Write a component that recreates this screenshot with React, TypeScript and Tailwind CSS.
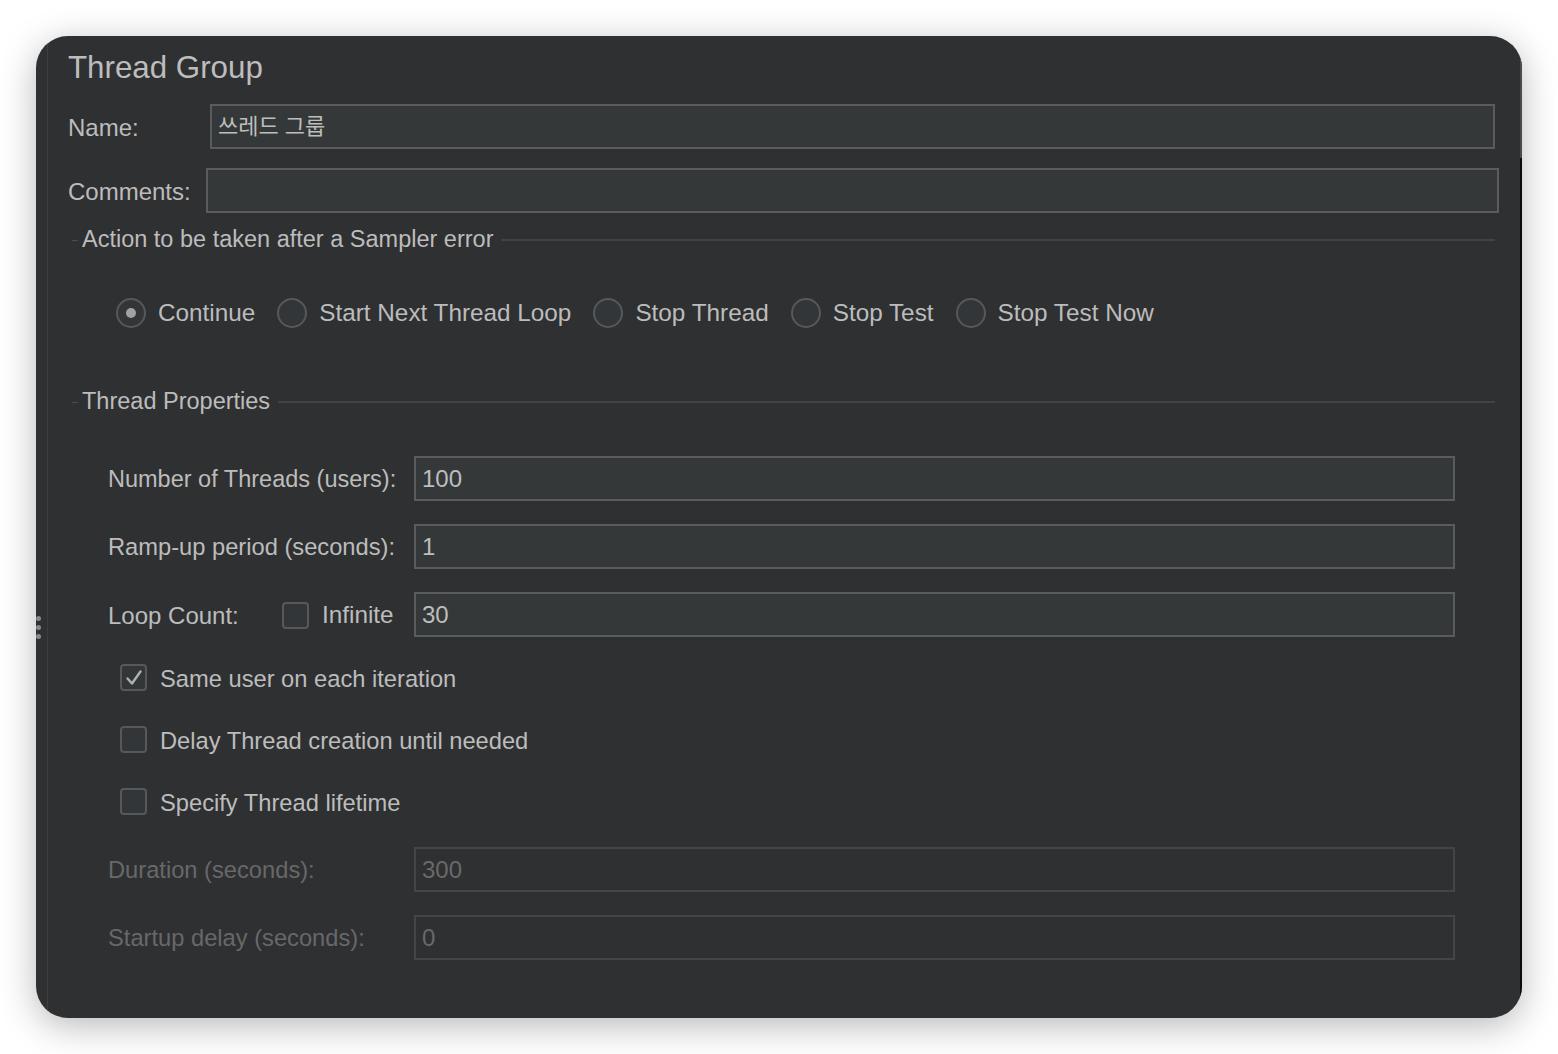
import React from "react";

const FONT = { fontFamily: '"Liberation Sans", "Noto Sans CJK KR", Arial, sans-serif' };

function Input({ value = "", disabled = false, className = "" }: { value?: string; disabled?: boolean; className?: string }) {
  return (
    <div
      className={
        "flex items-center h-[45px] border-2 pl-[6px] " +
        (disabled
          ? "bg-[#2f3032] border-[#434547] text-[#68696b] "
          : "bg-[#353839] border-[#595b5d] text-[#bdbdbd] ") +
        className
      }
    >
      {value}
    </div>
  );
}

function Radio({ checked = false, label }: { checked?: boolean; label: string }) {
  return (
    <div className="flex items-center">
      <div className="w-[30px] h-[30px] rounded-full border-2 border-[#56595b] bg-[#323638] flex items-center justify-center">
        {checked && <div className="w-[10px] h-[10px] rounded-full bg-[#a2a2a2]" />}
      </div>
      <span className="ml-[12px] text-[24.3px] text-[#bcbcbc] leading-none">{label}</span>
    </div>
  );
}

function Checkbox({ checked = false }: { checked?: boolean }) {
  return (
    <div className="w-[27px] h-[27px] shrink-0 rounded-[4px] border-2 border-[#56595b] bg-[#323638] flex items-center justify-center">
      {checked && (
        <svg width="20" height="20" viewBox="0 0 20 20">
          <path d="M3.5 10.5 L8 15.5 L16.5 3.5" fill="none" stroke="#b0b0b0" strokeWidth="2.4" strokeLinecap="round" strokeLinejoin="round" />
        </svg>
      )}
    </div>
  );
}

function GroupHeader({ title }: { title: string }) {
  return (
    <div className="flex items-center h-[24px] ml-[4px] mr-[25px]">
      <div className="w-[6px] h-[1px] bg-[#4a4c4e]" />
      <span className="ml-[4px] text-[23.5px] text-[#bcbcbc] leading-none">{title}</span>
      <div className="ml-[8px] flex-1 h-[2px] bg-[#414345]" />
    </div>
  );
}

function CheckRow({ checked = false, label, className = "" }: { checked?: boolean; label: string; className?: string }) {
  return (
    <div className={"flex items-center h-[27px] ml-[12px] " + className}>
      <Checkbox checked={checked} />
      <span className="ml-[13px] mt-[4px] text-[23.7px] leading-none text-[#bcbcbc]">{label}</span>
    </div>
  );
}

export default function App() {
  return (
    <div className="w-[1558px] h-[1054px] bg-white pt-[36px] pl-[36px]" style={FONT}>
      <div className="w-[1486px] h-[982px] rounded-[32px] bg-[#2f3032] overflow-hidden flex shadow-[0_8px_36px_rgba(0,0,0,0.28)]">
        {/* left splitter strip */}
        <div className="w-[11px] flex flex-col items-start pt-[580px] gap-[4px]">
          <div className="w-[5px] h-[5px] rounded-full bg-[#8a8a8a]" />
          <div className="w-[5px] h-[5px] rounded-full bg-[#8a8a8a]" />
          <div className="w-[5px] h-[5px] rounded-full bg-[#8a8a8a]" />
        </div>
        {/* main panel */}
        <div className="flex-1 border-l border-[#3d3e40] pl-[20px] pt-[14px] flex flex-col">
          <div className="text-[31.3px] leading-[36px] text-[#bdbdbd]">Thread Group</div>

          <div className="flex items-center mt-[18px] mr-[25px]">
            <span className="w-[142px] shrink-0 text-[24px] text-[#bcbcbc] pt-[2px]">Name:</span>
            <Input className="flex-1 text-[22px]" value="쓰레드 그룹" />
          </div>

          <div className="flex items-center mt-[19px] mr-[21px]">
            <span className="w-[138px] shrink-0 text-[24px] text-[#bcbcbc] pt-[2px]">Comments:</span>
            <Input className="flex-1 text-[24px]" />
          </div>

          <div className="mt-[15px]">
            <GroupHeader title="Action to be taken after a Sampler error" />
          </div>

          <div className="flex items-center mt-[46px] ml-[48px] gap-[22px]">
            <Radio checked label="Continue" />
            <Radio label="Start Next Thread Loop" />
            <Radio label="Stop Thread" />
            <Radio label="Stop Test" />
            <Radio label="Stop Test Now" />
          </div>

          <div className="mt-[62px]">
            <GroupHeader title="Thread Properties" />
          </div>

          <div className="ml-[40px] mr-[65px] flex flex-col">
            <div className="flex items-center mt-[42px]">
              <span className="w-[306px] shrink-0 text-[23.5px] text-[#bcbcbc] pt-[2px]">Number of Threads (users):</span>
              <Input className="flex-1 text-[24px]" value="100" />
            </div>
            <div className="flex items-center mt-[23px]">
              <span className="w-[306px] shrink-0 text-[23.7px] text-[#bcbcbc] pt-[2px]">Ramp-up period (seconds):</span>
              <Input className="flex-1 text-[24px]" value="1" />
            </div>
            <div className="flex items-center mt-[23px]">
              <div className="w-[306px] shrink-0 flex items-center pt-[2px]">
                <span className="w-[174px] shrink-0 text-[24px] text-[#bcbcbc]">Loop Count:</span>
                <Checkbox />
                <span className="ml-[13px] text-[24.3px] text-[#bcbcbc]">Infinite</span>
              </div>
              <Input className="flex-1 text-[24px]" value="30" />
            </div>

            <CheckRow checked label="Same user on each iteration" className="mt-[27px]" />
            <CheckRow label="Delay Thread creation until needed" className="mt-[35px]" />
            <CheckRow label="Specify Thread lifetime" className="mt-[35px]" />

            <div className="flex items-center mt-[32px]">
              <span className="w-[306px] shrink-0 text-[23.7px] text-[#67686a] pt-[2px]">Duration (seconds):</span>
              <Input disabled className="flex-1 text-[24px]" value="300" />
            </div>
            <div className="flex items-center mt-[23px]">
              <span className="w-[306px] shrink-0 text-[23.7px] text-[#67686a] pt-[2px]">Startup delay (seconds):</span>
              <Input disabled className="flex-1 text-[24px]" value="0" />
            </div>
          </div>
        </div>
        {/* right edge strip */}
        <div className="w-[2px] flex flex-col">
          <div className="h-[122px] bg-[#4a4b4d]" />
          <div className="flex-1 bg-[#0c0c0c]" />
        </div>
      </div>
    </div>
  );
}
